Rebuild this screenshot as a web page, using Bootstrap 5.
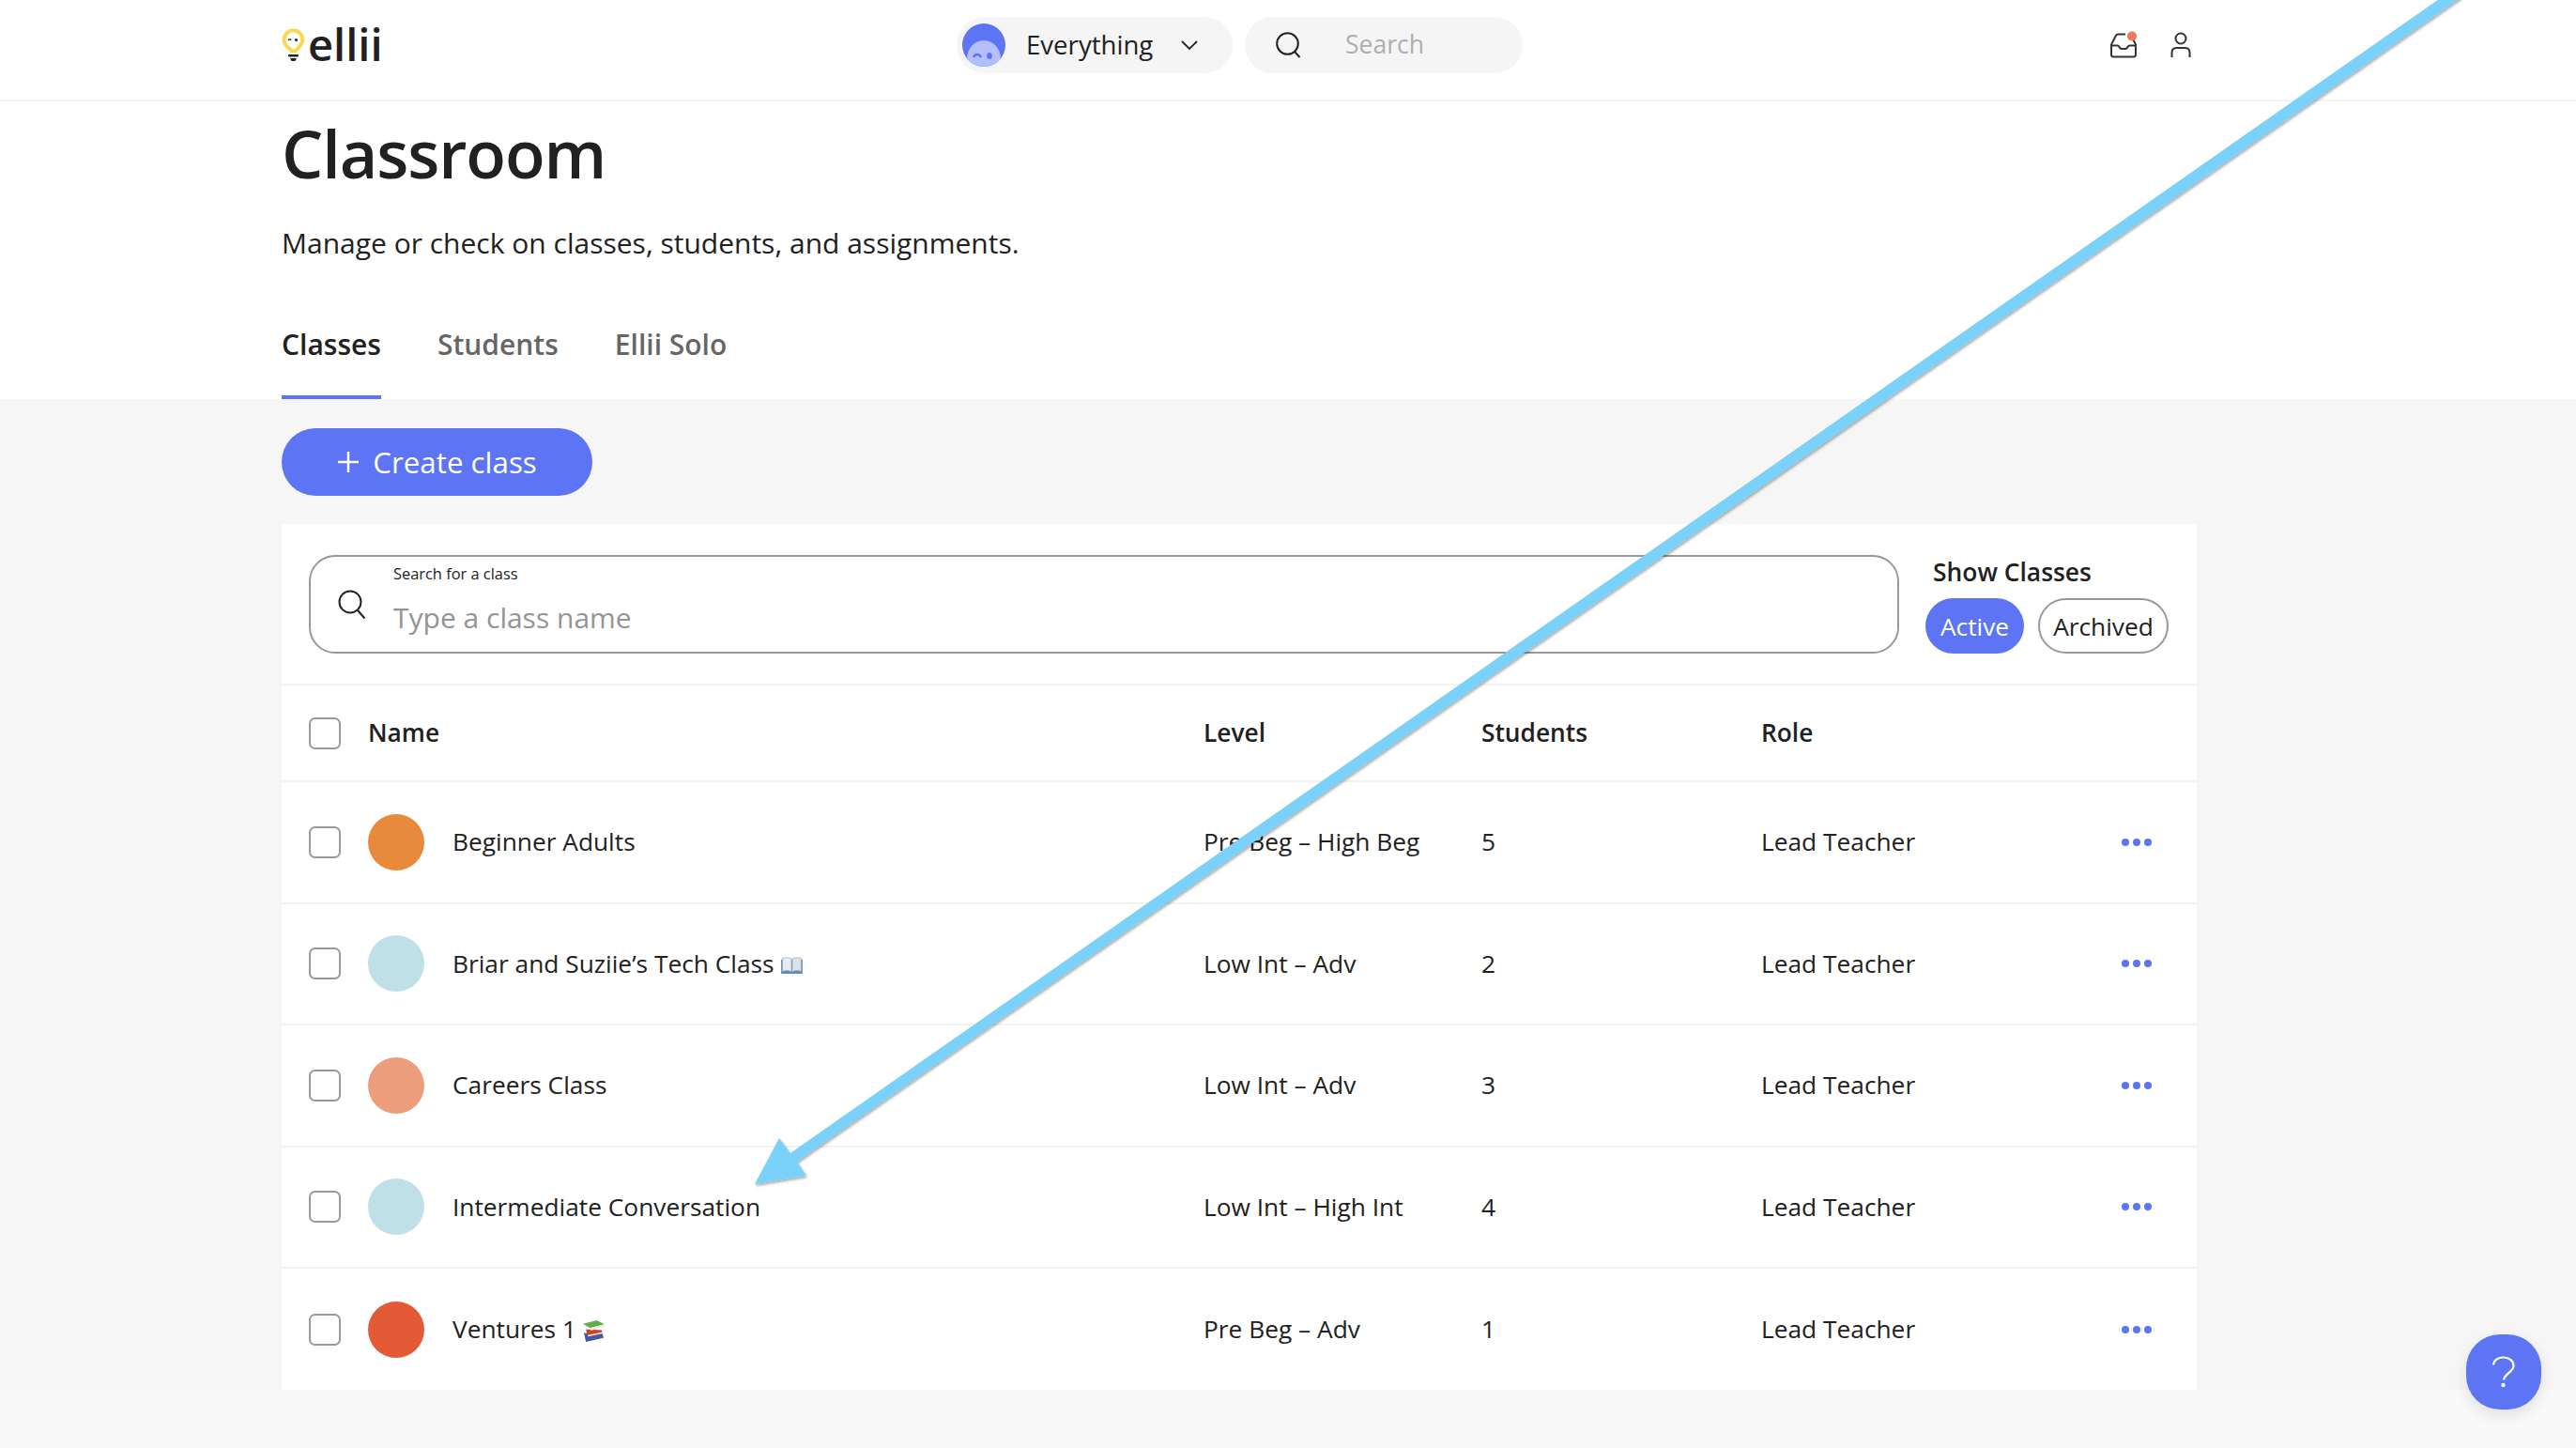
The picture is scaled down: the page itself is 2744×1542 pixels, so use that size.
<!doctype html>
<html lang="en">
<head>
<meta charset="utf-8">
<title>Classroom</title>
<link href="https://cdn.jsdelivr.net/npm/bootstrap@5.3.0/dist/css/bootstrap.min.css" rel="stylesheet">
<style>
:root{--el-blue:#5d75f5;--el-ink:#212121;--el-line:#f3f3f3}
html,body{height:1542px;overflow:hidden}
body{font-family:"Open Sans","Noto Sans",sans-serif;color:var(--el-ink);background:#f9f9f9;font-size:26.3px;position:relative}
.el-wrap{width:2040px;margin-left:300px}
.el-top{height:108px;background:#fff;border-bottom:2px solid var(--el-line)}
.el-top .el-wrap{height:96px;position:relative}
.el-logo{width:480px;gap:3px}
.el-logotext{font-size:47px;font-weight:600;line-height:1;margin-top:-2px}
.el-mid{gap:13px;padding-left:239px}
.el-pill{height:60px;background:#f5f5f5;border-radius:30px}
.el-pick{width:294px;padding:0 36px 0 6px;font-size:27.6px;font-weight:500}
.el-pick span{margin-left:22px;margin-right:auto}
.el-find{width:296px;padding-left:33px;color:#aeaeae;font-size:26.5px}
.el-find span{margin-left:47px}
.el-tools{margin-left:auto;gap:35px;padding-right:6px}
.el-hero{height:317px;background:#fff}
.el-title{font-size:70px;font-weight:600;line-height:72px;margin:0;padding-top:19px;letter-spacing:-1.1px}
.el-sub{font-size:30px;line-height:39px;margin:40px 0 0}
.el-tabs{gap:60px;margin-top:51px;font-size:30px;font-weight:600;color:#666}
.el-tab{height:96px;padding-top:18px;line-height:40px;border-bottom:4px solid transparent}
.el-tab-on{color:var(--el-ink);border-bottom-color:var(--el-blue)}
.el-main{height:1055px;background:#f6f6f6;padding-top:31px}
.el-create{height:72px;width:331px;background:var(--el-blue);color:#fff;border:0;border-radius:36px;font-size:31.3px;font-weight:500;gap:14px;padding:0}
.el-create:hover{background:var(--el-blue);color:#fff}
.el-box{background:#fff;margin-top:30px;height:922px}
.el-tophead{height:172px;padding:33px 29px 0;gap:29px;border-bottom:2px solid var(--el-line)}
.el-field{flex:1;height:105px;border:2px solid #999;border-radius:28px;padding-left:29px;gap:29px}
.el-label{font-size:16.4px;font-weight:500;line-height:1;margin-top:10px}
.el-input{border:0;padding:0;font-size:30px;color:var(--el-ink);line-height:1.3;box-shadow:none!important;margin-top:19px}
.el-input::placeholder{color:#949494}
.el-show{width:259px}
.el-showhead{font-size:26.4px;font-weight:600;line-height:1;padding-left:7px;margin-bottom:15px;margin-top:5px}
.el-seg{height:59px;border-radius:30px;font-size:26.3px;padding:0;line-height:1}
.el-seg-on{width:105px;background:var(--el-blue);color:#fff;border:0;margin-left:-1px}
.el-seg-on:hover{background:var(--el-blue);color:#fff}
.el-seg-off{width:139px;border:2px solid #999;color:var(--el-ink);margin-left:15px;background:#fff}
.el-row{height:129.5px;padding-left:29px;border-bottom:2px solid var(--el-line)}
.el-row:last-child{border-bottom:0}
.el-rowhead{height:103px;font-weight:600;font-size:26.3px}
.el-chk{width:34px;height:34px;margin:0;border:2px solid #999;border-radius:8px;flex:none}
.el-name{width:890px;margin-left:29px;gap:30px}
.el-dot{width:60px;height:60px;border-radius:50%;flex:none}
.el-level{width:296px}
.el-count{width:298px}
.el-role{width:384px}
.el-more{gap:4px}
.el-more i{width:8px;height:8px;border-radius:50%;background:var(--el-blue);display:block}
.el-help{position:absolute;left:2627px;top:1421px;width:80px;height:80px;background:var(--el-blue);border-radius:36px;box-shadow:0 6px 16px rgba(0,0,0,.1)}
.el-arrow{position:absolute;left:0;top:0;pointer-events:none}
.el-bg1{background:#e88a3c}.el-bg2{background:#bfe0e6}.el-bg3{background:#ec9d7b}.el-bg4{background:#e25a36}
</style>
</head>
<body>
<header class="el-top">
  <div class="el-wrap d-flex align-items-center">
    <div class="el-logo d-flex align-items-center">
      <svg width="25" height="37" viewBox="0 0 25 37" aria-hidden="true"><path d="M12.5 2.5a9.8 9.8 0 0 1 9.8 9.8c0 5.2-4.6 8.4-7.600 12h-4.200c-.6-1.800-2-2.600-3.400-3.700-2.700-2-4.400-4.700-4.400-8.300a9.800 9.800 0 0 1 9.800-9.800z" fill="#fff" stroke="#fbd84f" stroke-width="4"/><rect x="7" y="28" width="11" height="2.500" rx="1" fill="#222"/><path d="M9 32h7l-1.500 3h-4z" fill="#222"/><path d="M7 13c1-1.500 2.300-1.500 3.200 0" fill="none" stroke="#222" stroke-width="1.300"/><circle cx="15.500" cy="12.500" r="1.600" fill="#222"/></svg>
      <span class="el-logotext">ellii</span>
    </div>
    <div class="el-mid d-flex align-items-center">
      <div class="el-pill el-pick d-flex align-items-center">
        <svg width="46" height="46" viewBox="0 0 46 46" aria-hidden="true"><circle cx="23" cy="23" r="23" fill="#5d75f5"/><clipPath id="ev"><circle cx="23" cy="23" r="23"/></clipPath><ellipse cx="23" cy="38" rx="18" ry="20" fill="#b3bffb" clip-path="url(#ev)"/><path d="M12 36c1.500-4 6-4 8 0" fill="none" stroke="#5d75f5" stroke-width="2.500"/><ellipse cx="29" cy="34.500" rx="2.800" ry="3.600" fill="#5d75f5"/></svg>
        <span>Everything</span>
        <svg width="20" height="12" viewBox="0 0 20 12" aria-hidden="true"><path d="M2 2l8 8 8-8" fill="none" stroke="#222" stroke-width="1.800"/></svg>
      </div>
      <div class="el-pill el-find d-flex align-items-center">
        <svg width="27" height="28" viewBox="0 0 27 28" aria-hidden="true"><circle cx="12.500" cy="12.500" r="11.300" fill="none" stroke="#222" stroke-width="2"/><path d="M20 21l5.500 6" stroke="#222" stroke-width="2"/></svg>
        <span>Search</span>
      </div>
    </div>
    <div class="el-tools d-flex align-items-center">
      <svg width="30" height="30" viewBox="0 0 30 30" aria-hidden="true"><path d="M17 3.500H9c-1 0-1.500.400-2 1.300L2 14.500V25c0 1.500 1 2.500 2.500 2.500h21c1.500 0 2.500-1 2.500-2.500V14.500l-3-6" fill="none" stroke="#333" stroke-width="2"/><path d="M2 15.500h6.500c1 0 1.500.500 2 1.500.700 1.600 1.500 2 2.500 2h4c1 0 1.800-.400 2.500-2 .500-1 1-1.500 2-1.500h6.500" fill="none" stroke="#333" stroke-width="2"/><circle cx="24" cy="5.500" r="5" fill="#f2755c"/></svg>
      <svg width="22" height="28" viewBox="0 0 22 28" aria-hidden="true"><circle cx="11" cy="7" r="5.500" fill="none" stroke="#333" stroke-width="2"/><path d="M1.500 27v-5c0-3 2-5 5-5h9c3 0 5 2 5 5v5" fill="none" stroke="#333" stroke-width="2"/></svg>
    </div>
  </div>
</header>

<section class="el-hero">
  <div class="el-wrap">
    <h1 class="el-title">Classroom</h1>
    <p class="el-sub">Manage or check on classes, students, and assignments.</p>
    <div class="el-tabs d-flex">
      <div class="el-tab el-tab-on">Classes</div>
      <div class="el-tab">Students</div>
      <div class="el-tab">Ellii Solo</div>
    </div>
  </div>
</section>

<main class="el-main">
  <div class="el-wrap">
    <button class="btn el-create d-flex align-items-center justify-content-center" type="button">
      <svg width="24" height="24" viewBox="0 0 24 24" aria-hidden="true"><path d="M12 1v22M1 12h22" stroke="#fff" stroke-width="2.400"/></svg>
      Create class
    </button>
    <div class="el-box">
      <div class="el-tophead d-flex">
        <div class="el-field d-flex align-items-center">
          <svg width="30" height="32" viewBox="0 0 30 32" aria-hidden="true"><circle cx="13" cy="13" r="11.500" fill="none" stroke="#222" stroke-width="2"/><path d="M21 22l7.500 8.500" stroke="#222" stroke-width="2"/></svg>
          <div class="flex-grow-1 align-self-start">
            <div class="el-label">Search for a class</div>
            <input class="form-control el-input" type="text" placeholder="Type a class name">
          </div>
        </div>
        <div class="el-show">
          <div class="el-showhead">Show Classes</div>
          <div class="d-flex">
            <button class="btn el-seg el-seg-on" type="button">Active</button>
            <button class="btn el-seg el-seg-off" type="button">Archived</button>
          </div>
        </div>
      </div>
      <div class="el-row el-rowhead d-flex align-items-center">
        <input class="form-check-input el-chk" type="checkbox" aria-label="Select all">
        <div class="el-name">Name</div>
        <div class="el-level">Level</div>
        <div class="el-count">Students</div>
        <div class="el-role">Role</div>
      </div>
      <div class="el-row d-flex align-items-center">
        <input class="form-check-input el-chk" type="checkbox" aria-label="Select">
        <div class="el-name d-flex align-items-center"><span class="el-dot el-bg1"></span>Beginner Adults</div>
        <div class="el-level">Pre Beg – High Beg</div>
        <div class="el-count">5</div>
        <div class="el-role">Lead Teacher</div>
        <div class="el-more d-flex"><i></i><i></i><i></i></div>
      </div>
      <div class="el-row d-flex align-items-center">
        <input class="form-check-input el-chk" type="checkbox" aria-label="Select">
        <div class="el-name d-flex align-items-center"><span class="el-dot el-bg2"></span><span>Briar and Suziie’s Tech Class
          <svg width="25" height="19" viewBox="0 0 24 20" aria-hidden="true"><path d="M0 3h24v16H0z" fill="#5c8fb5"/><path d="M1.500 1.500c3.500-1 7.500-1 10 .5v14.500c-2.500-1.500-6.500-1.500-10-.5z" fill="#e9ecf2" stroke="#9aa6b5" stroke-width=".7"/><path d="M22.500 1.500c-3.500-1-7.500-1-10 .5v14.500c2.500-1.500 6.500-1.500 10-.5z" fill="#dde2ea" stroke="#9aa6b5" stroke-width=".7"/></svg></span></div>
        <div class="el-level">Low Int – Adv</div>
        <div class="el-count">2</div>
        <div class="el-role">Lead Teacher</div>
        <div class="el-more d-flex"><i></i><i></i><i></i></div>
      </div>
      <div class="el-row d-flex align-items-center">
        <input class="form-check-input el-chk" type="checkbox" aria-label="Select">
        <div class="el-name d-flex align-items-center"><span class="el-dot el-bg3"></span>Careers Class</div>
        <div class="el-level">Low Int – Adv</div>
        <div class="el-count">3</div>
        <div class="el-role">Lead Teacher</div>
        <div class="el-more d-flex"><i></i><i></i><i></i></div>
      </div>
      <div class="el-row d-flex align-items-center">
        <input class="form-check-input el-chk" type="checkbox" aria-label="Select">
        <div class="el-name d-flex align-items-center"><span class="el-dot el-bg2"></span>Intermediate Conversation</div>
        <div class="el-level">Low Int – High Int</div>
        <div class="el-count">4</div>
        <div class="el-role">Lead Teacher</div>
        <div class="el-more d-flex"><i></i><i></i><i></i></div>
      </div>
      <div class="el-row d-flex align-items-center">
        <input class="form-check-input el-chk" type="checkbox" aria-label="Select">
        <div class="el-name d-flex align-items-center"><span class="el-dot el-bg4"></span><span>Ventures 1
          <svg width="23" height="24" viewBox="0 0 22 23" aria-hidden="true"><path d="M1 13l2 9 18-4-1-4z" fill="#3d5aa8"/><path d="M3 9l2 8 15-3-1-4z" fill="#c9432a"/><path d="M5 15l15-3v1.500l-15 3z" fill="#eee"/><path d="M0 3.500l14-3.500 8 4-15 4z" fill="#5fae4a"/><path d="M7 8l15-4v2.500l-14 4z" fill="#e8efe4"/></svg></span></div>
        <div class="el-level">Pre Beg – Adv</div>
        <div class="el-count">1</div>
        <div class="el-role">Lead Teacher</div>
        <div class="el-more d-flex"><i></i><i></i><i></i></div>
      </div>
    </div>
  </div>
</main>

<svg class="el-arrow" width="2744" height="1542" viewBox="0 0 2744 1542" aria-hidden="true">
  <defs><filter id="ash" x="-5%" y="-5%" width="110%" height="110%"><feDropShadow dx="1" dy="2" stdDeviation="1.500" flood-color="#000" flood-opacity=".35"/></filter></defs>
  <path d="M804 1261L830 1212 842 1228 2611-10H2632L849 1237 859 1252Z" fill="#7ad1f9" filter="url(#ash)"/>
</svg>

<div class="el-help d-flex align-items-center justify-content-center">
  <svg width="26" height="34" viewBox="0 0 26 34" aria-hidden="true"><path d="M2 9.500C2.500 4.500 7 1.500 12.500 1.500c6 0 11 3.500 11 9 0 6.500-9.500 8-10.500 15" fill="none" stroke="#fff" stroke-width="2.200"/><circle cx="12.500" cy="31" r="2.200" fill="#fff"/></svg>
</div>
<script src="https://cdn.jsdelivr.net/npm/bootstrap@5.3.0/dist/js/bootstrap.bundle.min.js"></script>
</body>
</html>
